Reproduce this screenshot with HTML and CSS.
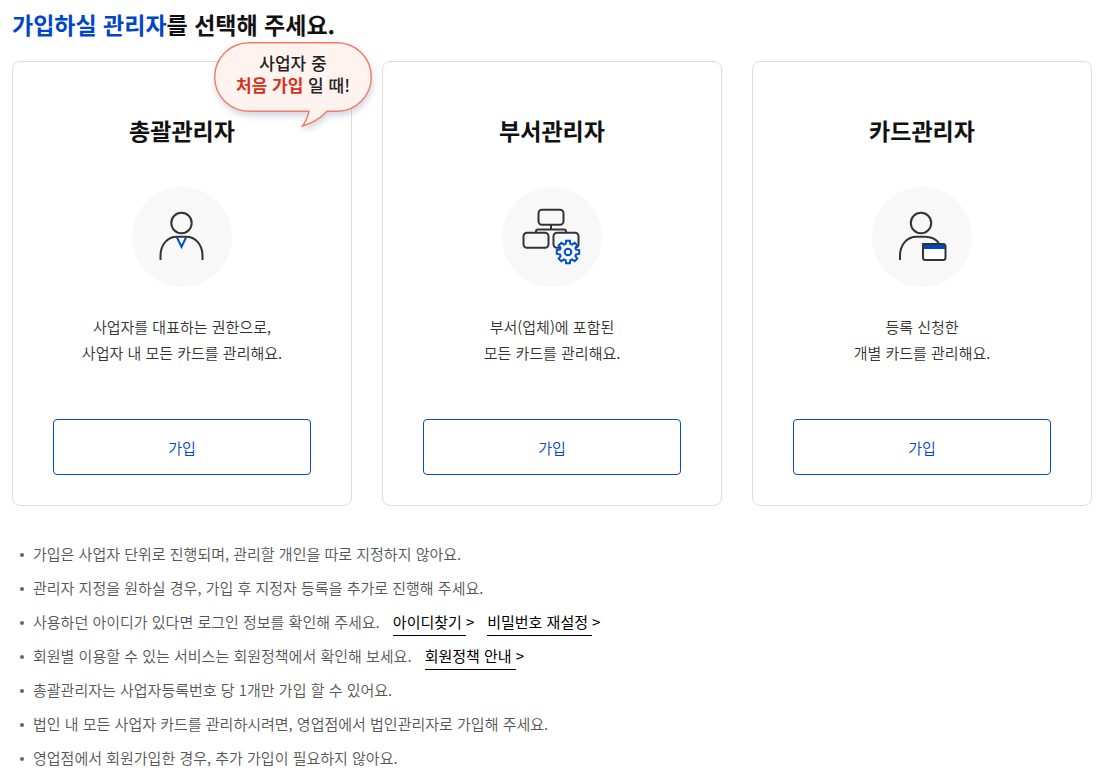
FILE: index.html
```html
<!DOCTYPE html>
<html lang="ko">
  <head>
    <meta charset="UTF-8" />
    <meta name="viewport" content="width=device-width, initial-scale=1.0" />
    <title>관리자 가입</title>
    <link rel="stylesheet" href="styles.css">
  </head>

  <body>
    <main class="container">
      <h1 class="title"><span class="point">가입하실 관리자</span>를 선택해 주세요.</h1>

      <div class="card-list">
        <section class="card">
          <div class="balloon">
            <svg class="balloon-bg" viewBox="0 0 158 86" aria-hidden="true">
              <path d="M35 .7H123A34.3 34.3 0 0 1 123 69.3H113Q103 80 88.500 84Q93 78 95 69.300H35A34.300 34.300 0 0 1 35 .7Z" />
            </svg>
            <p class="balloon-text">사업자 중<br /><em>처음 가입</em> 일 때!</p>
          </div>
          <h2>총괄관리자</h2>
          <svg class="icon" viewBox="0 0 100 100" aria-hidden="true">
            <circle class="icon-bg" cx="50" cy="50" r="50" />
            <circle class="line" cx="49.500" cy="36" r="10.200" />
            <path class="line blue" d="M45 50.500L49.500 60L54 50.500" />
            <path class="line" d="M28.500 73V69C28.500 57 36 49.800 45 49.800H54C63 49.800 70.500 57 70.500 69V73" />
          </svg>
          <p class="desc">사업자를 대표하는 권한으로,<br />사업자 내 모든 카드를 관리해요.</p>
          <button type="button" class="join">가입</button>
        </section>

        <section class="card">
          <h2>부서관리자</h2>
          <svg class="icon" viewBox="0 0 100 100" aria-hidden="true">
            <circle class="icon-bg" cx="50" cy="50" r="50" />
            <rect class="line" x="36.500" y="22.800" width="25" height="15" rx="3.500" />
            <path class="line" d="M49 38V42.500M34 46V44.500Q34 42.500 36 42.500H62Q64 42.500 64 44.500V46" />
            <rect class="line" x="21.500" y="45.800" width="25" height="15" rx="3.500" />
            <rect class="line" x="51.500" y="45.800" width="25" height="15" rx="3.500" />
            <g transform="translate(66 65)">
              <path class="line blue gear" d="M-1.900 -11.200H1.900L2.300 -8.100L4.100 -7.400L6.600 -9.300L9.300 -6.600L7.400 -4.100L8.100 -2.300L11.200 -1.900V1.900L8.100 2.300L7.400 4.100L9.300 6.600L6.600 9.300L4.100 7.400L2.300 8.100L1.900 11.200H-1.900L-2.300 8.100L-4.100 7.400L-6.600 9.300L-9.300 6.600L-7.400 4.100L-8.100 2.300L-11.200 1.900V-1.900L-8.100 -2.300L-7.400 -4.100L-9.300 -6.600L-6.600 -9.300L-4.100 -7.400L-2.300 -8.100Z" />
              <circle class="line blue" r="3.300" />
            </g>
          </svg>
          <p class="desc">부서(업체)에 포함된<br />모든 카드를 관리해요.</p>
          <button type="button" class="join">가입</button>
        </section>

        <section class="card">
          <h2>카드관리자</h2>
          <svg class="icon" viewBox="0 0 100 100" aria-hidden="true">
            <circle class="icon-bg" cx="50" cy="50" r="50" />
            <circle class="line" cx="49" cy="36" r="10.200" />
            <path class="line" d="M28 73V69C28 57 35.500 49.800 44.500 49.800H53C59 49.800 64 52 67 56.500" />
            <rect class="card-body" x="51" y="57" width="22.500" height="16" rx="2.500" />
            <path class="card-band" d="M52 57.500H73V62H52Z" />
            <path class="line" d="M51 57H71Q73.500 57 73.500 59.500V70.500Q73.500 73 71 73H53.500Q51 73 51 70.500Z" />
          </svg>
          <p class="desc">등록 신청한<br />개별 카드를 관리해요.</p>
          <button type="button" class="join">가입</button>
        </section>
      </div>

      <ul class="notice">
        <li>가입은 사업자 단위로 진행되며, 관리할 개인을 따로 지정하지 않아요.</li>
        <li>관리자 지정을 원하실 경우, 가입 후 지정자 등록을 추가로 진행해 주세요.</li>
        <li>사용하던 아이디가 있다면 로그인 정보를 확인해 주세요. <a href="#" class="link"><span>아이디찾기</span>&gt;</a><a href="#" class="link"><span>비밀번호 재설정</span>&gt;</a></li>
        <li>회원별 이용할 수 있는 서비스는 회원정책에서 확인해 보세요. <a href="#" class="link"><span>회원정책 안내</span>&gt;</a></li>
        <li>총괄관리자는 사업자등록번호 당 1개만 가입 할 수 있어요.</li>
        <li>법인 내 모든 사업자 카드를 관리하시려면, 영업점에서 법인관리자로 가입해 주세요.</li>
        <li>영업점에서 회원가입한 경우, 추가 가입이 필요하지 않아요.</li>
      </ul>
    </main>
  </body>
</html>
```

FILE: styles.css
```css
* {
  box-sizing: border-box;
  margin: 0;
  padding: 0;
}

body {
  font-family: "Noto Sans CJK KR", "Noto Sans", sans-serif;
  font-size: 15px;
  font-weight: 350;
  line-height: 26px;
  color: #333;
  background: #fff;
}

.container {
  padding: 7px 19px 0 12px;
}

.title {
  font-size: 23px;
  font-weight: 700;
  line-height: 34px;
  color: #111;
}

.point {
  color: #0046c8;
}

.card-list {
  display: grid;
  grid-template-columns: repeat(3, 1fr);
  gap: 30px;
  margin-top: 20px;
}

.card {
  position: relative;
  display: flex;
  flex-direction: column;
  align-items: center;
  padding: 51px 40px 30px;
  border: 1px solid #ddd;
  border-radius: 8px;
  text-align: center;
}

.card h2 {
  font-size: 23px;
  font-weight: 700;
  line-height: 34px;
  color: #111;
}

.icon {
  width: 100px;
  height: 100px;
  margin: 40px 0 27px;
}

.icon-bg {
  fill: #f8f8f8;
}

.line {
  fill: none;
  stroke: #333;
  stroke-width: 2;
}

.blue {
  stroke: #0050c8;
}

.gear {
  fill: #f8f8f8;
}

.card-body {
  fill: #fff;
}

.card-band {
  fill: #0046c8;
}

.join {
  width: 100%;
  height: 56px;
  margin-top: 53px;
  padding-top: 2px;
  border: 1px solid #0050c0;
  border-radius: 4px;
  background: #fff;
  font: inherit;
  color: #0046c8;
  cursor: pointer;
}

/* speech balloon over the first card */
.balloon {
  position: absolute;
  top: -20px;
  right: -21px;
  width: 158px;
}

.balloon-bg {
  display: block;
  width: 100%;
  overflow: visible;
  fill: #fff3f0;
  stroke: #f87865;
  stroke-width: 1.4;
  filter: drop-shadow(1px 4px 3px rgba(40, 60, 100, 0.2));
}

.balloon-text {
  position: absolute;
  top: 10px;
  left: 0;
  width: 100%;
  font-size: 17px;
  font-weight: 500;
  line-height: 22px;
  color: #222;
}

.balloon-text em {
  font-style: normal;
  font-weight: 700;
  color: #d9301a;
}

.notice {
  margin-top: 35px;
  list-style: none;
  color: #555;
}

.notice li {
  position: relative;
  padding-left: 21px;
  margin-bottom: 8px;
}

.notice li::before {
  content: "";
  position: absolute;
  top: 12px;
  left: 8px;
  width: 4px;
  height: 4px;
  border-radius: 50%;
  background: #666;
}

.link {
  margin-left: 9px;
  font-weight: 400;
  color: #000;
  text-decoration: none;
}

.link + .link {
  margin-left: 13px;
}

.link span {
  padding: 0 4px 3px 0;
  border-bottom: 1px solid #000;
}
```
